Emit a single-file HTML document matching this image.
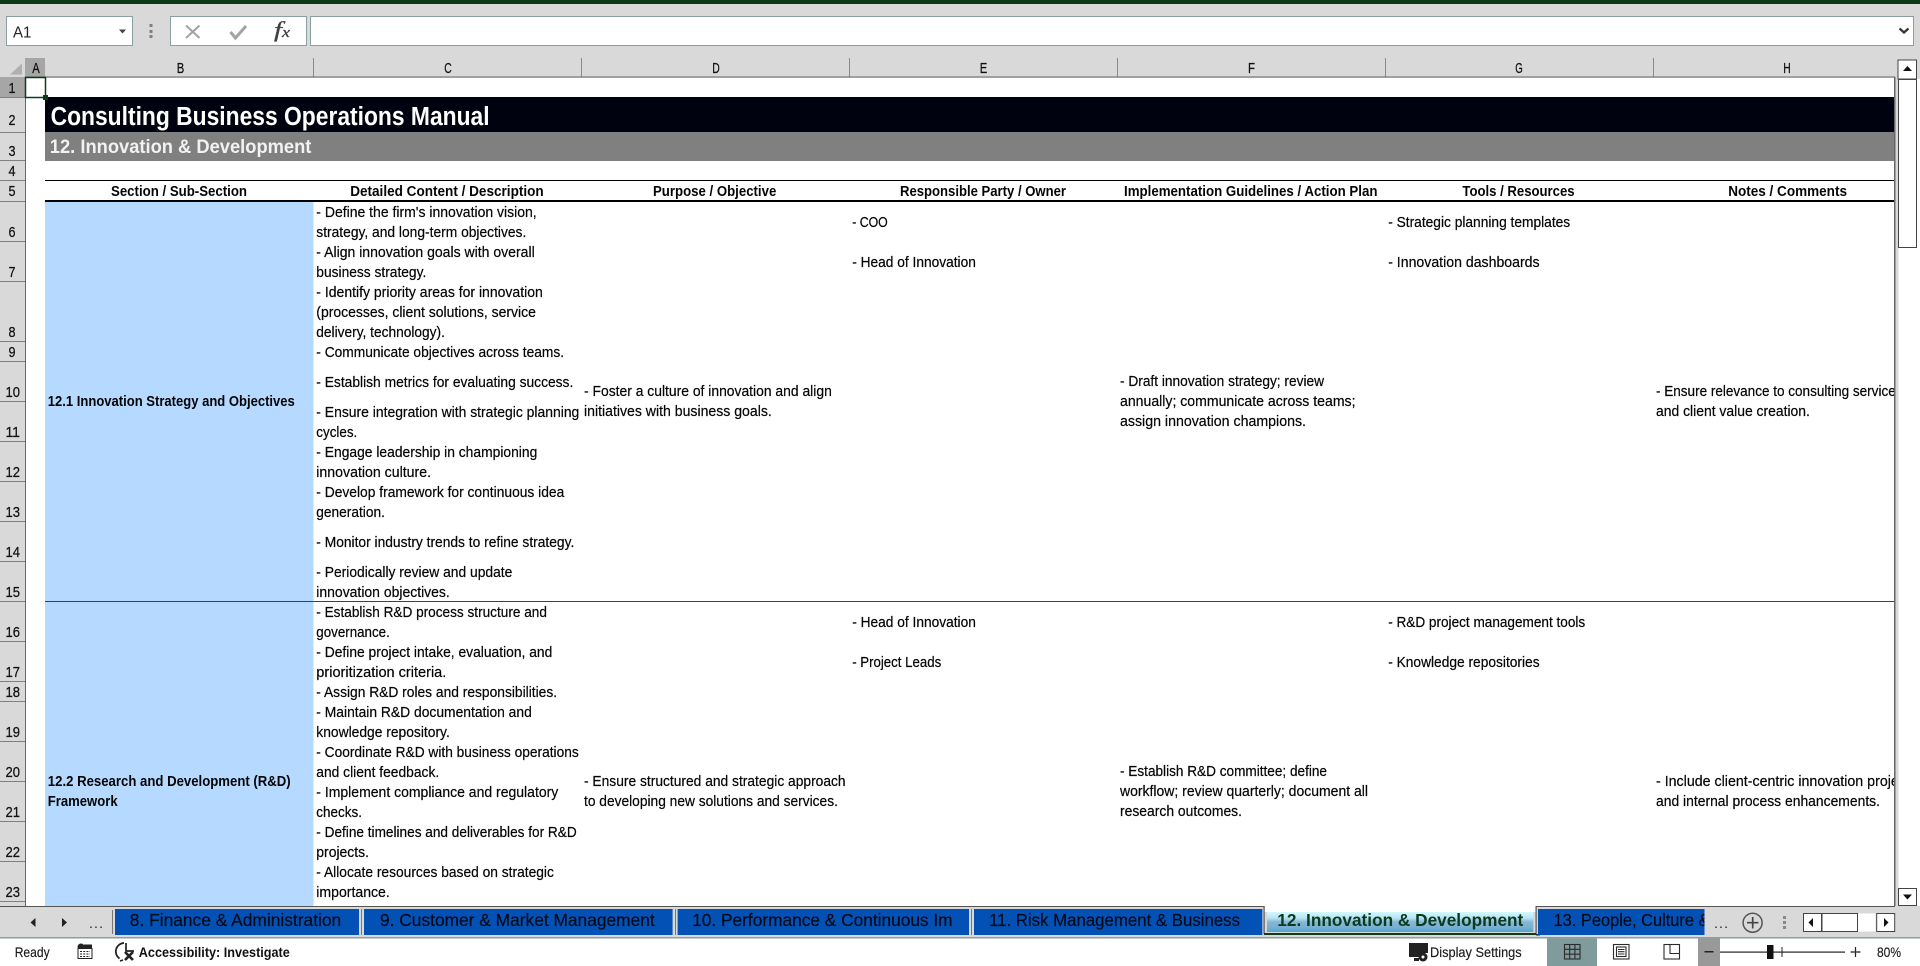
<!DOCTYPE html>
<html lang="en">
<head>
<meta charset="utf-8">
<title>Consulting Business Operations Manual</title>
<style>
html,body{margin:0;padding:0;width:1920px;height:966px;overflow:hidden;background:#fff}
svg{display:block}
text{font-family:"Liberation Sans",Arial,sans-serif;white-space:pre}
.c{font-size:14.5px;fill:#050505;stroke:#050505;stroke-width:.2px}
.b{font-size:14.5px;font-weight:bold;fill:#050505}
.n{font-size:15px;fill:#111;stroke:#111;stroke-width:.25px}
.t{font-size:17.5px;fill:#030a18;stroke:#030a18;stroke-width:.2px}
.s{font-size:14px;fill:#1a1a1a;stroke:#1a1a1a;stroke-width:.15px}
</style>
</head>
<body>
<svg width="1920" height="966" viewBox="0 0 1920 966" xmlns="http://www.w3.org/2000/svg">
<!-- chrome backgrounds -->
<rect width="1920" height="966" fill="#d9d9d9"/>
<rect width="1920" height="4" fill="#0a3a17"/>
<!-- name box / formula bar -->
<rect x="6.5" y="16.5" width="126" height="29" fill="#fff" stroke="#8aa0a0"/>
<text x="13" y="37.5" font-size="16" fill="#222" textLength="18.4" lengthAdjust="spacingAndGlyphs">A1</text>
<path d="M119 29.5h7l-3.5 4z" fill="#404040"/>
<rect x="149.5" y="24" width="3" height="3" fill="#808080"/><rect x="149.5" y="30" width="3" height="3" fill="#808080"/><rect x="149.5" y="35" width="3" height="3" fill="#808080"/>
<rect x="170.5" y="16.5" width="136" height="29" fill="#fff" stroke="#8aa0a0"/>
<path d="M186 25.5l13.5 12.5M199.5 25.5l-13.5 12.5" stroke="#a3a3a3" stroke-width="2" fill="none"/>
<path d="M230.500 32l5 6 10.500-12" stroke="#a3a3a3" stroke-width="3" fill="none"/>
<text x="274" y="37" font-size="22" font-style="italic" fill="#404040" stroke="#404040" stroke-width=".3" style="font-family:'Liberation Serif',serif" textLength="8" lengthAdjust="spacingAndGlyphs">f</text>
<text x="282" y="37" font-size="15" font-style="italic" fill="#404040" stroke="#404040" stroke-width=".3" style="font-family:'Liberation Serif',serif" textLength="8" lengthAdjust="spacingAndGlyphs">x</text>
<rect x="310.500" y="16.500" width="1603" height="29" fill="#fff" stroke="#8aa0a0"/>
<path d="M1899.500 28.500l4.500 4 4.500-4" stroke="#333" stroke-width="2.200" fill="none"/>

<!-- sheet white -->
<rect x="26" y="78" width="1868" height="828" fill="#fff"/>

<!-- col header -->
<path d="M10 74.500h12v-11z" fill="#b0b0b0"/>
<rect x="25" y="58" width="20" height="19" fill="#a6a6a6"/>
<g fill="#8a8a8a">
<rect x="313" y="58" width="1" height="19"/><rect x="581" y="58" width="1" height="19"/><rect x="849" y="58" width="1" height="19"/><rect x="1117" y="58" width="1" height="19"/><rect x="1385" y="58" width="1" height="19"/><rect x="1653" y="58" width="1" height="19"/>
</g>
<rect x="25" y="76.500" width="1870" height="1" fill="#666"/>
<g class="n" text-anchor="middle">
<text class="n" x="36" y="73" textLength="7.500" lengthAdjust="spacingAndGlyphs">A</text>
<text class="n" x="180.500" y="73" textLength="7.500" lengthAdjust="spacingAndGlyphs">B</text>
<text class="n" x="448" y="73" textLength="7.500" lengthAdjust="spacingAndGlyphs">C</text>
<text class="n" x="716" y="73" textLength="7.500" lengthAdjust="spacingAndGlyphs">D</text>
<text class="n" x="983.500" y="73" textLength="7.500" lengthAdjust="spacingAndGlyphs">E</text>
<text class="n" x="1251.500" y="73" textLength="7" lengthAdjust="spacingAndGlyphs">F</text>
<text class="n" x="1519" y="73" textLength="7.500" lengthAdjust="spacingAndGlyphs">G</text>
<text class="n" x="1787" y="73" textLength="7.500" lengthAdjust="spacingAndGlyphs">H</text>
</g>

<!-- row header -->
<rect x="0" y="77" width="25" height="20" fill="#a6a6a6"/>
<rect x="25" y="77" width="1" height="829" fill="#666"/>
<g fill="#808080">
<rect x="0" y="97" width="25" height="1"/><rect x="0" y="132" width="25" height="1"/><rect x="0" y="160" width="25" height="1"/><rect x="0" y="180" width="25" height="1"/><rect x="0" y="201" width="25" height="1"/><rect x="0" y="241" width="25" height="1"/><rect x="0" y="281" width="25" height="1"/><rect x="0" y="341" width="25" height="1"/><rect x="0" y="361" width="25" height="1"/><rect x="0" y="401" width="25" height="1"/><rect x="0" y="441" width="25" height="1"/><rect x="0" y="481" width="25" height="1"/><rect x="0" y="521" width="25" height="1"/><rect x="0" y="561" width="25" height="1"/><rect x="0" y="601" width="25" height="1"/><rect x="0" y="641" width="25" height="1"/><rect x="0" y="681" width="25" height="1"/><rect x="0" y="701" width="25" height="1"/><rect x="0" y="741" width="25" height="1"/><rect x="0" y="781" width="25" height="1"/><rect x="0" y="821" width="25" height="1"/><rect x="0" y="861" width="25" height="1"/><rect x="0" y="901" width="25" height="1"/>
</g>
<g text-anchor="middle">
<text class="n" x="12" y="93" textLength="7" lengthAdjust="spacingAndGlyphs">1</text>
<text class="n" x="12" y="125" textLength="7" lengthAdjust="spacingAndGlyphs">2</text>
<text class="n" x="12" y="156" textLength="7" lengthAdjust="spacingAndGlyphs">3</text>
<text class="n" x="12" y="176" textLength="7" lengthAdjust="spacingAndGlyphs">4</text>
<text class="n" x="12" y="196" textLength="7" lengthAdjust="spacingAndGlyphs">5</text>
<text class="n" x="12" y="237" textLength="7" lengthAdjust="spacingAndGlyphs">6</text>
<text class="n" x="12" y="277" textLength="7" lengthAdjust="spacingAndGlyphs">7</text>
<text class="n" x="12" y="337" textLength="7" lengthAdjust="spacingAndGlyphs">8</text>
<text class="n" x="12" y="357" textLength="7" lengthAdjust="spacingAndGlyphs">9</text>
<text class="n" x="12.700" y="397" textLength="14.500" lengthAdjust="spacingAndGlyphs">10</text>
<text class="n" x="12.700" y="437" textLength="14.500" lengthAdjust="spacingAndGlyphs">11</text>
<text class="n" x="12.700" y="477" textLength="14.500" lengthAdjust="spacingAndGlyphs">12</text>
<text class="n" x="12.700" y="517" textLength="14.500" lengthAdjust="spacingAndGlyphs">13</text>
<text class="n" x="12.700" y="557" textLength="14.500" lengthAdjust="spacingAndGlyphs">14</text>
<text class="n" x="12.700" y="597" textLength="14.500" lengthAdjust="spacingAndGlyphs">15</text>
<text class="n" x="12.700" y="637" textLength="14.500" lengthAdjust="spacingAndGlyphs">16</text>
<text class="n" x="12.700" y="677" textLength="14.500" lengthAdjust="spacingAndGlyphs">17</text>
<text class="n" x="12.700" y="697" textLength="14.500" lengthAdjust="spacingAndGlyphs">18</text>
<text class="n" x="12.700" y="737" textLength="14.500" lengthAdjust="spacingAndGlyphs">19</text>
<text class="n" x="12.700" y="777" textLength="14.500" lengthAdjust="spacingAndGlyphs">20</text>
<text class="n" x="12.700" y="817" textLength="14.500" lengthAdjust="spacingAndGlyphs">21</text>
<text class="n" x="12.700" y="857" textLength="14.500" lengthAdjust="spacingAndGlyphs">22</text>
<text class="n" x="12.700" y="897" textLength="14.500" lengthAdjust="spacingAndGlyphs">23</text>
</g>

<!-- bands -->
<rect x="45" y="97" width="1849" height="35" fill="#00030f"/>
<rect x="45" y="132" width="1849" height="29" fill="#808080"/>
<text x="50.600" y="125" font-size="25.500" font-weight="bold" fill="#fff" textLength="439" lengthAdjust="spacingAndGlyphs">Consulting Business Operations Manual</text>
<text x="49.800" y="153" font-size="19" font-weight="bold" fill="#f2f2f2" textLength="261.600" lengthAdjust="spacingAndGlyphs">12. Innovation &amp; Development</text>
<rect x="45" y="180" width="1849" height="1" fill="#000"/>
<rect x="45" y="200" width="1849" height="2" fill="#000"/>
<rect x="45" y="202" width="268.500" height="704" fill="#b6d9ff"/>
<rect x="45" y="601" width="1849" height="1" fill="#404040"/>

<!-- header labels -->
<text class="b" x="111" y="196" textLength="136" lengthAdjust="spacingAndGlyphs">Section / Sub-Section</text>
<text class="b" x="350.200" y="196" textLength="193.500" lengthAdjust="spacingAndGlyphs">Detailed Content / Description</text>
<text class="b" x="653" y="196" textLength="123.300" lengthAdjust="spacingAndGlyphs">Purpose / Objective</text>
<text class="b" x="900" y="196" textLength="166" lengthAdjust="spacingAndGlyphs">Responsible Party / Owner</text>
<text class="b" x="1124" y="196" textLength="253.500" lengthAdjust="spacingAndGlyphs">Implementation Guidelines / Action Plan</text>
<text class="b" x="1462.400" y="196" textLength="112.200" lengthAdjust="spacingAndGlyphs">Tools / Resources</text>
<text class="b" x="1728.200" y="196" textLength="118.800" lengthAdjust="spacingAndGlyphs">Notes / Comments</text>

<!-- B -->
<text class="b" x="47.800" y="406" textLength="247" lengthAdjust="spacingAndGlyphs">12.1 Innovation Strategy and Objectives</text>
<text class="b" x="47.800" y="786" textLength="242.900" lengthAdjust="spacingAndGlyphs">12.2 Research and Development (R&amp;D)</text>
<text class="b" x="47.800" y="806" textLength="69.800" lengthAdjust="spacingAndGlyphs">Framework</text>

<!-- C -->
<text class="c" x="316.300" y="217" textLength="220.400" lengthAdjust="spacingAndGlyphs">- Define the firm's innovation vision,</text>
<text class="c" x="316.300" y="237" textLength="210" lengthAdjust="spacingAndGlyphs">strategy, and long-term objectives.</text>
<text class="c" x="316.300" y="257" textLength="218.400" lengthAdjust="spacingAndGlyphs">- Align innovation goals with overall</text>
<text class="c" x="316.300" y="277" textLength="110" lengthAdjust="spacingAndGlyphs">business strategy.</text>
<text class="c" x="316.300" y="297" textLength="226.500" lengthAdjust="spacingAndGlyphs">- Identify priority areas for innovation</text>
<text class="c" x="316.300" y="317" textLength="219.600" lengthAdjust="spacingAndGlyphs">(processes, client solutions, service</text>
<text class="c" x="316.300" y="337" textLength="128.600" lengthAdjust="spacingAndGlyphs">delivery, technology).</text>
<text class="c" x="316.300" y="357" textLength="247.800" lengthAdjust="spacingAndGlyphs">- Communicate objectives across teams.</text>
<text class="c" x="316.300" y="387" textLength="257" lengthAdjust="spacingAndGlyphs">- Establish metrics for evaluating success.</text>
<text class="c" x="316.300" y="417" textLength="263" lengthAdjust="spacingAndGlyphs">- Ensure integration with strategic planning</text>
<text class="c" x="316.300" y="437" textLength="41" lengthAdjust="spacingAndGlyphs">cycles.</text>
<text class="c" x="316.300" y="457" textLength="221" lengthAdjust="spacingAndGlyphs">- Engage leadership in championing</text>
<text class="c" x="316.300" y="477" textLength="114.700" lengthAdjust="spacingAndGlyphs">innovation culture.</text>
<text class="c" x="316.300" y="497" textLength="248" lengthAdjust="spacingAndGlyphs">- Develop framework for continuous idea</text>
<text class="c" x="316.300" y="517" textLength="68.600" lengthAdjust="spacingAndGlyphs">generation.</text>
<text class="c" x="316.300" y="547" textLength="258" lengthAdjust="spacingAndGlyphs">- Monitor industry trends to refine strategy.</text>
<text class="c" x="316.300" y="577" textLength="196" lengthAdjust="spacingAndGlyphs">- Periodically review and update</text>
<text class="c" x="316.300" y="597" textLength="133.500" lengthAdjust="spacingAndGlyphs">innovation objectives.</text>
<text class="c" x="316.300" y="617" textLength="230.600" lengthAdjust="spacingAndGlyphs">- Establish R&amp;D process structure and</text>
<text class="c" x="316.300" y="637" textLength="73.500" lengthAdjust="spacingAndGlyphs">governance.</text>
<text class="c" x="316.300" y="657" textLength="236" lengthAdjust="spacingAndGlyphs">- Define project intake, evaluation, and</text>
<text class="c" x="316.300" y="677" textLength="130" lengthAdjust="spacingAndGlyphs">prioritization criteria.</text>
<text class="c" x="316.300" y="697" textLength="240.800" lengthAdjust="spacingAndGlyphs">- Assign R&amp;D roles and responsibilities.</text>
<text class="c" x="316.300" y="717" textLength="215.500" lengthAdjust="spacingAndGlyphs">- Maintain R&amp;D documentation and</text>
<text class="c" x="316.300" y="737" textLength="133.500" lengthAdjust="spacingAndGlyphs">knowledge repository.</text>
<text class="c" x="316.300" y="757" textLength="262.400" lengthAdjust="spacingAndGlyphs">- Coordinate R&amp;D with business operations</text>
<text class="c" x="316.300" y="777" textLength="122.900" lengthAdjust="spacingAndGlyphs">and client feedback.</text>
<text class="c" x="316.300" y="797" textLength="242" lengthAdjust="spacingAndGlyphs">- Implement compliance and regulatory</text>
<text class="c" x="316.300" y="817" textLength="45.700" lengthAdjust="spacingAndGlyphs">checks.</text>
<text class="c" x="316.300" y="837" textLength="260.400" lengthAdjust="spacingAndGlyphs">- Define timelines and deliverables for R&amp;D</text>
<text class="c" x="316.300" y="857" textLength="52.700" lengthAdjust="spacingAndGlyphs">projects.</text>
<text class="c" x="316.300" y="877" textLength="237.600" lengthAdjust="spacingAndGlyphs">- Allocate resources based on strategic</text>
<text class="c" x="316.300" y="897" textLength="73.500" lengthAdjust="spacingAndGlyphs">importance.</text>

<!-- D -->
<text class="c" x="584" y="396" textLength="247.800" lengthAdjust="spacingAndGlyphs">- Foster a culture of innovation and align</text>
<text class="c" x="584" y="416" textLength="187.800" lengthAdjust="spacingAndGlyphs">initiatives with business goals.</text>
<text class="c" x="584" y="786" textLength="261.600" lengthAdjust="spacingAndGlyphs">- Ensure structured and strategic approach</text>
<text class="c" x="584" y="806" textLength="253.900" lengthAdjust="spacingAndGlyphs">to developing new solutions and services.</text>

<!-- E -->
<text class="c" x="852.200" y="227" textLength="35.500" lengthAdjust="spacingAndGlyphs">- COO</text>
<text class="c" x="852.200" y="267" textLength="123.700" lengthAdjust="spacingAndGlyphs">- Head of Innovation</text>
<text class="c" x="852.200" y="627" textLength="123.700" lengthAdjust="spacingAndGlyphs">- Head of Innovation</text>
<text class="c" x="852.200" y="667" textLength="89" lengthAdjust="spacingAndGlyphs">- Project Leads</text>

<!-- F -->
<text class="c" x="1120" y="386" textLength="204" lengthAdjust="spacingAndGlyphs">- Draft innovation strategy; review</text>
<text class="c" x="1120" y="406" textLength="235.500" lengthAdjust="spacingAndGlyphs">annually; communicate across teams;</text>
<text class="c" x="1120" y="426" textLength="186" lengthAdjust="spacingAndGlyphs">assign innovation champions.</text>
<text class="c" x="1120" y="776" textLength="207" lengthAdjust="spacingAndGlyphs">- Establish R&amp;D committee; define</text>
<text class="c" x="1120" y="796" textLength="248" lengthAdjust="spacingAndGlyphs">workflow; review quarterly; document all</text>
<text class="c" x="1120" y="816" textLength="122" lengthAdjust="spacingAndGlyphs">research outcomes.</text>

<!-- G -->
<text class="c" x="1388.200" y="227" textLength="182" lengthAdjust="spacingAndGlyphs">- Strategic planning templates</text>
<text class="c" x="1388.200" y="267" textLength="151.400" lengthAdjust="spacingAndGlyphs">- Innovation dashboards</text>
<text class="c" x="1388.200" y="627" textLength="197" lengthAdjust="spacingAndGlyphs">- R&amp;D project management tools</text>
<text class="c" x="1388.200" y="667" textLength="151.400" lengthAdjust="spacingAndGlyphs">- Knowledge repositories</text>

<!-- H -->
<text class="c" x="1656" y="396" textLength="246.500" lengthAdjust="spacingAndGlyphs">- Ensure relevance to consulting services</text>
<text class="c" x="1656" y="416" textLength="153.900" lengthAdjust="spacingAndGlyphs">and client value creation.</text>
<text class="c" x="1656" y="786" textLength="261" lengthAdjust="spacingAndGlyphs">- Include client-centric innovation projects</text>
<text class="c" x="1656" y="806" textLength="224" lengthAdjust="spacingAndGlyphs">and internal process enhancements.</text>

<!-- selection -->
<rect x="25.500" y="77.500" width="20" height="20" fill="none" stroke="#0f3b1b" stroke-width="1.500"/>
<rect x="43" y="95" width="5" height="5" fill="#0f3b1b"/>

<!-- right edge and scrollbar -->
<rect x="1898" y="79" width="22" height="827" fill="#fff"/>
<rect x="1894.500" y="77" width="4" height="829" fill="#d9d9d9"/>
<rect x="1894" y="77" width="1.500" height="829" fill="#666"/>
<rect x="1898" y="60" width="18.500" height="19" fill="#fff" stroke="#444"/>
<path d="M1903 71h9l-4.500-5z" fill="#111"/>
<rect x="1898.500" y="79.500" width="18" height="168" fill="#fff" stroke="#444"/>
<rect x="1898.500" y="888.500" width="18" height="17" fill="#fff" stroke="#444"/>
<path d="M1903 894.500h9l-4.500 5z" fill="#111"/>

<!-- tab bar -->
<rect x="0" y="906" width="1920" height="32" fill="#d9d9d9"/>
<rect x="0" y="906" width="1264" height="1" fill="#555"/>
<rect x="1536" y="906" width="359" height="1" fill="#555"/>
<rect x="0" y="937" width="1920" height="1.500" fill="#8aa0a0"/>
<path d="M35.500 918v9l-5-4.500z" fill="#222"/>
<path d="M62 918v9l5-4.500z" fill="#222"/>
<text x="89" y="928" font-size="14" fill="#222" textLength="14" lengthAdjust="spacing">...</text>
<rect x="112" y="910" width="1" height="24" fill="#777"/>

<rect x="115" y="909" width="244" height="26" fill="#0451b5"/>
<rect x="364" y="909" width="308.600" height="26" fill="#0451b5"/>
<rect x="677.600" y="909" width="291.400" height="26" fill="#0451b5"/>
<rect x="974" y="909" width="288.400" height="26" fill="#0451b5"/>
<g fill="#777">
<rect x="361" y="909" width="1" height="26"/><rect x="675" y="909" width="1" height="26"/><rect x="971" y="909" width="1" height="26"/>
</g>
<text class="t" x="129.800" y="926" textLength="211.400" lengthAdjust="spacingAndGlyphs">8. Finance &amp; Administration</text>
<text class="t" x="380" y="926" textLength="274.700" lengthAdjust="spacingAndGlyphs">9. Customer &amp; Market Management</text>
<text class="t" x="692.200" y="926" textLength="260.400" lengthAdjust="spacingAndGlyphs">10. Performance &amp; Continuous Im</text>
<text class="t" x="989" y="926" textLength="251" lengthAdjust="spacingAndGlyphs">11. Risk Management &amp; Business</text>

<!-- active tab -->
<defs>
<linearGradient id="ag" x1="0" y1="0" x2="0" y2="1">
<stop offset="0" stop-color="#d2f9fd"/><stop offset=".3" stop-color="#b9e4f2"/><stop offset=".5" stop-color="#85b6d8"/><stop offset=".75" stop-color="#7bb0cf"/><stop offset="1" stop-color="#4dabd8"/>
</linearGradient>
</defs>
<rect x="1264.500" y="906" width="271" height="6" fill="#fff"/>
<rect x="1263.500" y="906" width="1.200" height="28" fill="#555"/>
<rect x="1535.500" y="906" width="1.200" height="28" fill="#555"/>
<rect x="1267" y="912" width="266.400" height="20" fill="url(#ag)"/>
<rect x="1264" y="933" width="272" height="2" fill="#0f3b1b"/>
<rect x="1536" y="934" width="4" height="1.500" fill="#0f3b1b"/>
<text x="1277.300" y="926" font-size="17.500" font-weight="bold" fill="#0b3a1e" textLength="246" lengthAdjust="spacingAndGlyphs">12. Innovation &amp; Development</text>

<!-- tab 13 -->
<rect x="1538" y="909" width="166.500" height="26" fill="#0451b5"/>
<text class="t" x="1553.500" y="926" textLength="156" lengthAdjust="spacingAndGlyphs">13. People, Culture &amp;</text>
<rect x="1704.500" y="909" width="12" height="26" fill="#d9d9d9"/>
<text x="1714" y="928" font-size="14" fill="#222" textLength="14" lengthAdjust="spacing">...</text>
<circle cx="1752.600" cy="922.700" r="9.500" fill="none" stroke="#555" stroke-width="1.500"/>
<path d="M1747 922.700h11.500M1752.700 917v11.500" stroke="#444" stroke-width="1.700"/>
<rect x="1783" y="916" width="3" height="3" fill="#8a8a8a"/><rect x="1783" y="921" width="3" height="3" fill="#8a8a8a"/><rect x="1783" y="926" width="3" height="3" fill="#8a8a8a"/>
<rect x="1803.500" y="913.500" width="72" height="18" fill="#fff"/>
<rect x="1803.500" y="913.500" width="18" height="18" fill="#fff" stroke="#444"/>
<path d="M1813 918v9l-4.500-4.500z" fill="#111"/>
<rect x="1822" y="913.500" width="35.500" height="18" fill="#fff" stroke="#444"/>
<rect x="1876.700" y="913.500" width="18" height="18" fill="#fff" stroke="#444"/>
<path d="M1884 918v9l4.500-4.500z" fill="#111"/>

<!-- status bar -->
<rect x="0" y="938.500" width="1920" height="27.500" fill="#fff"/>
<text class="s" x="14.700" y="957" textLength="35" lengthAdjust="spacingAndGlyphs">Ready</text>
<g>
<circle cx="81" cy="947" r="3.500" fill="#222"/>
<rect x="84" y="944.500" width="8" height="4" fill="#222"/>
<rect x="78" y="948.500" width="14" height="10" fill="#fff" stroke="#222"/>
<path d="M80 951.500h10M80 954h10M80 956.500h10" stroke="#222" stroke-dasharray="2 1.200"/>
</g>
<g fill="none" stroke="#222" stroke-width="1.700">
<path d="M124 943a8.500 8.500 0 0 0-4.500 15.500"/>
<path d="M126 943v8h8"/>
<path d="M125 960l8-8M125 952l8 8" stroke-width="2.600"/>
<path d="M120 961l3-1"/>
</g>
<text x="138.800" y="957" font-size="14" font-weight="bold" fill="#111" textLength="151" lengthAdjust="spacingAndGlyphs">Accessibility: Investigate</text>

<path d="M1409 943h19v10h-6v6h-3v-2h-10z" fill="#222"/>
<path d="M1414 958h5v3h-5z" fill="#222"/>
<circle cx="1423" cy="957" r="4.500" fill="#222"/><circle cx="1423" cy="957" r="1.500" fill="#fff"/>
<text class="s" x="1430" y="957" textLength="91.700" lengthAdjust="spacingAndGlyphs">Display Settings</text>

<rect x="1547" y="938.500" width="50" height="27.500" fill="#809b9b"/>
<g fill="none" stroke="#2b2b2b" stroke-width="1.100">
<rect x="1564.500" y="944.500" width="15.500" height="14.500"/>
<path d="M1569.700 944.500v14.500M1574.900 944.500v14.500M1564.500 949.300h15.500M1564.500 954.200h15.500"/>
<rect x="1613.500" y="944.500" width="15.500" height="14.500"/>
<rect x="1616.500" y="947" width="9.500" height="9.500"/>
<path d="M1618 949.500h6.500M1618 951.700h6.500M1618 954h6.500"/>
<rect x="1664" y="944.500" width="15.500" height="14.500"/>
<path d="M1670 944.500v9h9.500"/>
</g>
<rect x="1698" y="938.500" width="22" height="27.500" fill="#999"/>
<rect x="1704.500" y="951" width="9" height="1.500" fill="#222"/>
<rect x="1720" y="951.500" width="125" height="1.200" fill="#222"/>
<rect x="1767" y="945" width="6.500" height="14" fill="#111"/>
<rect x="1781.500" y="947" width="1" height="10" fill="#222"/>
<path d="M1850.500 952h10M1855.500 947v10" stroke="#222" stroke-width="1.200"/>
<text class="s" x="1877" y="957" textLength="24" lengthAdjust="spacingAndGlyphs">80%</text>
</svg>
</body>
</html>
